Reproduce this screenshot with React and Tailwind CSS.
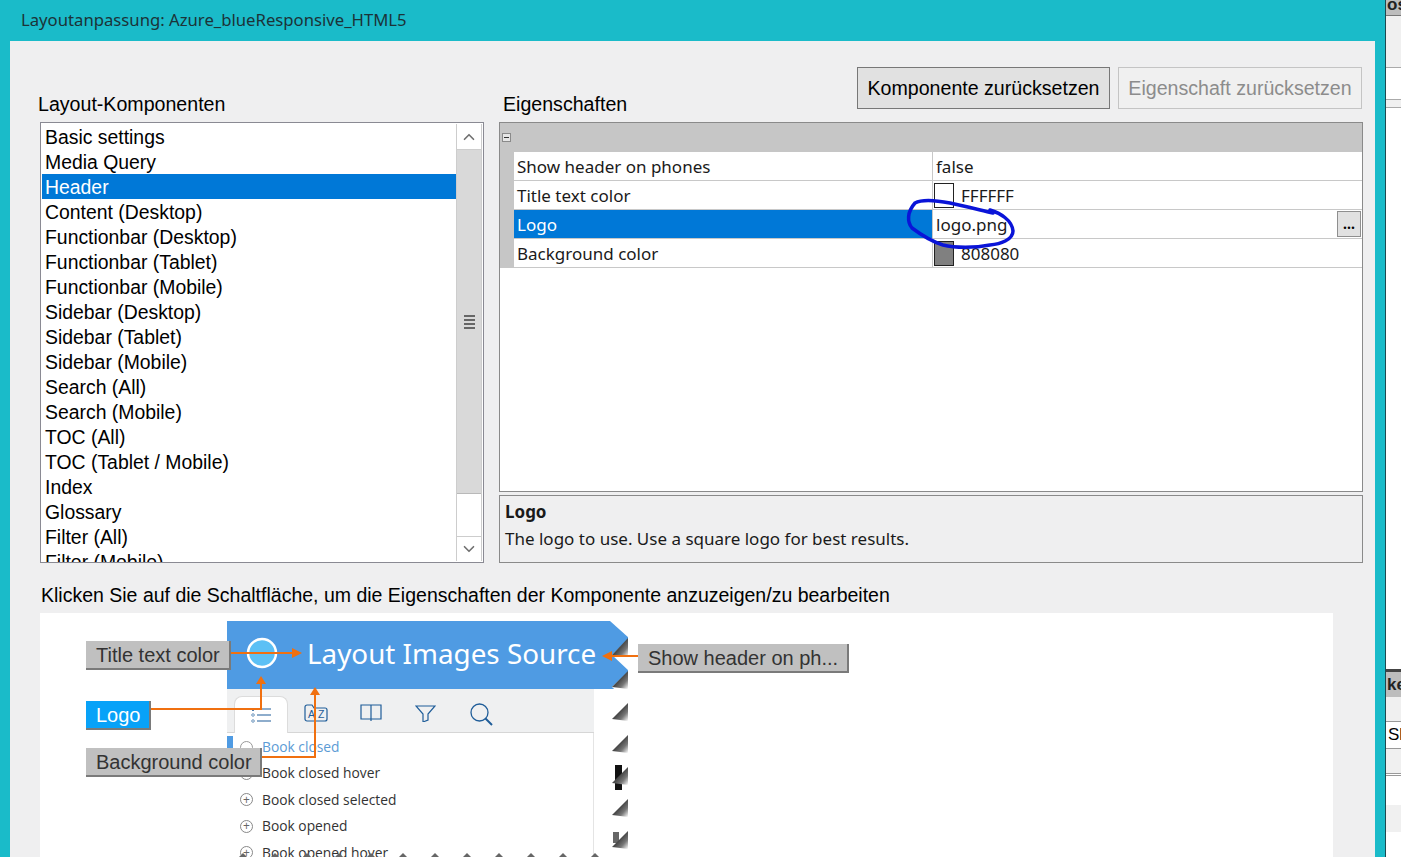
import { ChevronUp, ChevronDown } from 'lucide-react';

const components = [
    'Basic settings', 'Media Query', 'Header', 'Content (Desktop)', 'Functionbar (Desktop)',
    'Functionbar (Tablet)', 'Functionbar (Mobile)', 'Sidebar (Desktop)', 'Sidebar (Tablet)',
    'Sidebar (Mobile)', 'Search (All)', 'Search (Mobile)', 'TOC (All)', 'TOC (Tablet / Mobile)',
    'Index', 'Glossary', 'Filter (All)', 'Filter (Mobile)',
];

const peaks = [638, 671, 703, 735, 767, 799, 831, 863];
const notches = [655, 687, 719, 751, 783, 815, 847];
const dots = [243, 275, 307, 339, 371, 403, 435, 467, 499, 531, 563, 595];

function ComponentList() {
    return (
        <div className="relative w-[444px] h-[441px] border border-[#8a8a93] bg-white overflow-hidden">
            <ul className="pl-[1px] pt-[1px] w-[415px] text-[19.400px] leading-[27px] text-black font-['Liberation_Sans',sans-serif]">
                {components.map((name) => (
                    <li key={name} className={name === 'Header' ? 'pl-[3px] h-[25px] bg-[#0078d7] text-white' : 'pl-[3px] h-[25px]'}>{name}</li>
                ))}
            </ul>
            <div className="absolute right-[1px] top-[1px] bottom-[1px] w-[26px] flex flex-col border-x border-[#cdcdcd] bg-white">
                <div className="h-[26px] border-b border-[#cdcdcd] flex items-center justify-center text-[#707070]">
                    <ChevronUp size={18} strokeWidth={2.2} />
                </div>
                <div className="h-[344px] bg-[#d9d9d9] border-b border-[#b9b9b9] flex flex-col items-center justify-center gap-[2px]">
                    <div className="w-[11px] h-[2px] bg-[#666]" />
                    <div className="w-[11px] h-[2px] bg-[#666]" />
                    <div className="w-[11px] h-[2px] bg-[#666]" />
                    <div className="w-[11px] h-[2px] bg-[#666]" />
                </div>
                <div className="flex-1" />
                <div className="h-[25px] border-t border-[#cdcdcd] flex items-center justify-center text-[#707070]">
                    <ChevronDown size={18} strokeWidth={2.2} />
                </div>
            </div>
        </div>
    );
}

function PropRow({ name, selected, swatch, value, button }) {
    return (
        <div className="flex h-[29px] border-b border-[#c8c8c8] text-[17px] leading-[28px] text-[#1a1a1a]">
            <div className={selected ? 'w-[418px] pl-[3px] pt-[1px] bg-[#0078d7] text-white' : 'w-[418px] pl-[3px] pt-[1px] bg-white'}>{name}</div>
            <div className="flex-1 flex items-center border-l border-[#c8c8c8] bg-white relative">
                {swatch ? (
                    <>
                        <div className={`ml-[1px] w-[20px] h-[25px] border border-[#222] ${swatch}`} />
                        <span className="ml-[7px] pt-[2px]">{value}</span>
                    </>
                ) : (
                    <span className="ml-[3px] pt-[2px]">{value}</span>
                )}
                {button && (
                    <div className="absolute right-[1px] top-[1px] w-[24px] h-[26px] bg-[#e1e1e1] border border-[#8f8f8f] flex items-center justify-center text-[14px] leading-[18px] font-bold text-black">...</div>
                )}
            </div>
        </div>
    );
}

function PropertyGrid() {
    return (
        <div className="h-[370px] border border-[#8a8a8a] bg-white font-['Noto_Sans',sans-serif]">
            <div className="h-[29px] bg-[#c6c6c6] flex items-center pl-[2px]">
                <div className="w-[9px] h-[9px] border border-[#8a8a8a] bg-[#e6e6e6] flex items-center justify-center">
                    <div className="w-[5px] h-[1px] bg-[#333]" />
                </div>
            </div>
            <div className="flex">
                <div className="w-[14px] h-[116px] bg-[#c6c6c6]" />
                <div className="flex-1">
                    <PropRow name="Show header on phones" value="false" />
                    <PropRow name="Title text color" value="FFFFFF" swatch="bg-white" />
                    <PropRow name="Logo" value="logo.png" selected button />
                    <PropRow name="Background color" value="808080" swatch="bg-[#808080]" />
                </div>
            </div>
        </div>
    );
}

function ToolbarIcons() {
    return (
        <div className="h-[44px] bg-[#eff0f1] border-b border-[#d6d6d6] flex pl-[7px] relative w-[367px]">
            <div className="w-[54px] h-[37px] mt-[7px] bg-white border border-b-0 border-[#dcdcdc] rounded-t-[8px] flex items-center justify-center">
                <svg width="20" height="16" viewBox="0 0 20 16" fill="none" stroke="#1f5d99" strokeWidth="1.1">
                    <path d="M6 2h14M6 8h14M6 14h14" />
                    <path d="M2 1l1.500 1.500L2 4 .5 2.500zM2 6.500 3.500 8 2 9.500 .5 8zM2 12.500 3.500 14 2 15.500 .5 14z" strokeWidth="0.8" />
                </svg>
            </div>
            <svg className="ml-[16px] mt-[15px]" width="24" height="18" viewBox="0 0 24 18" fill="none" stroke="#1f5d99" strokeWidth="1.2">
                <path d="M1 3a2 2 0 0 1 2-2h5l2 3h11a2 2 0 0 1 2 2v9a2 2 0 0 1-2 2H3a2 2 0 0 1-2-2z" />
                <text x="4" y="14" fontSize="10.500" stroke="none" fill="#1f5d99" fontFamily="Liberation Sans">A</text>
                <text x="14" y="14" fontSize="10.500" stroke="none" fill="#1f5d99" fontFamily="Liberation Sans">Z</text>
            </svg>
            <svg className="ml-[32px] mt-[15px]" width="22" height="17" viewBox="0 0 22 17" fill="none" stroke="#1f5d99" strokeWidth="1.2">
                <path d="M1 1h20v14H1zM11 1v16" />
            </svg>
            <svg className="ml-[33px] mt-[16px]" width="21" height="17" viewBox="0 0 21 17" fill="none" stroke="#1f5d99" strokeWidth="1.2">
                <path d="M1 1h19l-7 8v6l-5 2V9z" />
            </svg>
            <svg className="ml-[34px] mt-[14px]" width="23" height="23" viewBox="0 0 23 23" fill="none" stroke="#1f5d99" strokeWidth="1.300">
                <circle cx="9.500" cy="9.500" r="8.500" />
                <path d="M15.500 15.500 22 22" strokeWidth="2" />
            </svg>
        </div>
    );
}

function Preview() {
    const rows = ['Book closed hover', 'Book closed selected', 'Book opened', 'Book opened hover'];
    return (
        <div className="ml-[187px] mt-[8px] w-[401px] font-['Open_Sans',sans-serif]">
            <div className="h-[68px] bg-[#4f9be3] flex items-center pl-[80px] pb-[5px] text-[27.800px] leading-[34px] text-white font-['Noto_Sans',sans-serif]">Layout Images Source</div>
            <ToolbarIcons />
            <div className="relative w-[367px] h-[130px] border-r border-[#e4e4e4] bg-white pt-[1px] text-[13.800px] leading-[26.500px] text-[#333]">
                <div className="absolute left-0 top-[3px] w-[6px] h-[12px] bg-[#4f9be3]" />
                <div className="flex items-center pl-[13px] h-[26px]">
                    <span className="w-[13px] h-[13px] rounded-full border border-[#999] mr-[9px]" />
                    <span className="text-[#5b9bd5]">Book closed</span>
                </div>
                {rows.map((row) => (
                    <div key={row} className="flex items-center pl-[13px] h-[26.500px]">
                        <span className="w-[13px] h-[13px] rounded-full border border-[#888] mr-[9px] flex items-center justify-center text-[12px] leading-[12px] text-[#666]">+</span>
                        <span>{row}</span>
                    </div>
                ))}
            </div>
        </div>
    );
}

function Callout({ className, children }) {
    return (
        <div className={`absolute h-[29px] pl-[10px] text-[20px] leading-[28px] border-r-2 border-b-2 border-[#7a7a7a] font-['Liberation_Sans',sans-serif] ${className}`}>{children}</div>
    );
}

function Diagram() {
    return (
        <div className="relative ml-[30px] w-[1293px] h-[244px] bg-white overflow-hidden">
            <Preview />
            <svg className="absolute left-0 top-0" width="1293" height="244" viewBox="40 613 1293 244" fill="none">
                <defs>
                    <linearGradient id="tooth" x1="0" y1="0" x2="1" y2="1">
                        <stop offset="0.5" stopColor="#4a4a4a" />
                        <stop offset="0.72" stopColor="#777777" />
                        <stop offset="1" stopColor="#ffffff" />
                    </linearGradient>
                </defs>
                <polygon points="610,621 629,621 629,638" fill="#ffffff" />
                {notches.map((n, i) => (
                    <polygon key={n} points={`629,${peaks[i]} 612,${n} 629,${peaks[i + 1]}`} fill="#ffffff" />
                ))}
                <rect x="615" y="765" width="7" height="25" fill="#111" />
                <rect x="613" y="832" width="6" height="11" fill="#666" />
                {notches.map((n, i) => (
                    <polygon key={n} points={`628,${peaks[i]} 612,${n} 628,${n + 2}`} fill="url(#tooth)" />
                ))}
                {dots.map((x) => (
                    <polygon key={x} points={`${x - 4},857 ${x},853 ${x + 4},857`} fill="#666" />
                ))}
                <circle cx="262" cy="653" r="14" fill="#5cc0f5" stroke="#ffffff" strokeWidth="2.500" />
                <path d="M231 653H296" stroke="#f07010" strokeWidth="2" />
                <polygon points="292,648 302,653 292,658" fill="#f07010" />
                <path d="M151 709H261V682" stroke="#f07010" strokeWidth="2" />
                <polygon points="256,684 261,676 266,684" fill="#f07010" />
                <path d="M262 757H315V693" stroke="#f07010" strokeWidth="2" />
                <polygon points="310,695 315,687 320,695" fill="#f07010" />
                <path d="M638 656H608" stroke="#f07010" strokeWidth="2" />
                <polygon points="612,651 602,656 612,661" fill="#f07010" />
            </svg>
            <Callout className="left-[46px] top-[28px] w-[145px] bg-[#c0c0c0] text-[#333]">Title text color</Callout>
            <Callout className="left-[46px] top-[88px] w-[65px] bg-[#08a2f8] text-white">Logo</Callout>
            <Callout className="left-[46px] top-[135px] w-[176px] bg-[#c0c0c0] text-[#333]">Background color</Callout>
            <Callout className="left-[598px] top-[31px] w-[211px] bg-[#c0c0c0] text-[#333]">Show header on ph...</Callout>
        </div>
    );
}

function RightSliver() {
    return (
        <div className="flex-1 border-l border-[#1d4a50] flex flex-col text-[17px] font-['Liberation_Sans',sans-serif] overflow-hidden">
            <div className="h-[16px] bg-[#bdbdbd] border-b border-[#777] leading-[10px] font-bold text-[#222] pl-[1px]">os</div>
            <div className="h-[52px] bg-[#f0f0f0] border-b border-[#aaa]" />
            <div className="h-[32px] bg-white border-b border-[#aaa]" />
            <div className="h-[8px] bg-[#f0f0f0] border-b border-[#aaa]" />
            <div className="h-[561px] bg-white" />
            <div className="h-[3px] bg-[#444]" />
            <div className="h-[25px] bg-[#bdbdbd] leading-[25px] font-bold text-[#222] pl-[1px]">ke</div>
            <div className="h-[25px] bg-[#f0f0f0] border-b border-[#999]" />
            <div className="h-[27px] bg-white border-b border-[#999] leading-[26px] text-black pl-[2px]">Sl</div>
            <div className="h-[25px] bg-[#f0f0f0] border-b border-[#999]" />
            <div className="h-[2px] bg-white border-b border-[#999]" />
            <div className="h-[29px] bg-white" />
            <div className="h-[27px] bg-[#f0f0f0]" />
            <div className="flex-1 bg-white" />
        </div>
    );
}

export default function App() {
    return (
        <div className="relative flex w-[1401px] h-[857px] overflow-hidden bg-white">
            <div className="w-[1385px] flex flex-col bg-[#1abbc9]">
                <div className="h-[41px] pl-[21px] text-[16.700px] leading-[39px] text-[#1c3338] font-['Noto_Sans',sans-serif]">Layoutanpassung: Azure_blueResponsive_HTML5</div>
                <div className="mx-[10px] flex-1 bg-[#efeff0] flex flex-col">
                    <div className="flex pl-[30px] h-[81px] text-[19.600px] leading-[24px] text-black font-['Liberation_Sans',sans-serif]">
                        <div className="w-[459px] -ml-[2px] pl-0 pt-[51px]">Layout-Komponenten</div>
                        <div className="w-[866px] flex justify-between pt-[26px]">
                            <div className="pt-[25px] pl-[6px]">Eigenschaften</div>
                            <div className="flex gap-[8px] h-[42px] pr-[1px]">
                                <div className="w-[253px] border border-[#777] bg-[#e1e1e1] flex items-center justify-center">Komponente zurücksetzen</div>
                                <div className="w-[244px] border border-[#c4c4c4] bg-[#f0f0f0] text-[#8c8c8c] flex items-center justify-center">Eigenschaft zurücksetzen</div>
                            </div>
                        </div>
                    </div>
                    <div className="flex pl-[30px] gap-[15px]">
                        <ComponentList />
                        <div className="w-[864px] flex flex-col gap-[3px]">
                            <PropertyGrid />
                            <div className="h-[68px] border border-[#8a8a8a] px-[5px] pt-[2px] text-[17px] leading-[27px] text-[#1a1a1a] font-['Noto_Sans',sans-serif]">
                                <div className="font-bold">Logo</div>
                                <div>The logo to use. Use a square logo for best results.</div>
                            </div>
                        </div>
                    </div>
                    <div className="h-[50px] pl-[31px] pt-[20px] text-[19.500px] leading-[24px] text-black font-['Liberation_Sans',sans-serif]">Klicken Sie auf die Schaltfläche, um die Eigenschaften der Komponente anzuzeigen/zu bearbeiten</div>
                    <Diagram />
                </div>
            </div>
            <RightSliver />
            {/* hand drawn mark around logo.png */}
            <svg className="absolute left-[900px] top-[190px]" width="130" height="70" viewBox="900 190 130 70" fill="none">
                <path d="M990 210C1000 213 1012 220 1013 231C1013 240 1000 244 990 245C975 248 955 248 943 245C930 241 920 234 912 228C907 222 907 212 915 203C922 199 935 200 950 203C965 206 980 210 993 213" stroke="#0a14d8" strokeWidth="3.500" strokeLinecap="round" />
            </svg>
        </div>
    );
}
